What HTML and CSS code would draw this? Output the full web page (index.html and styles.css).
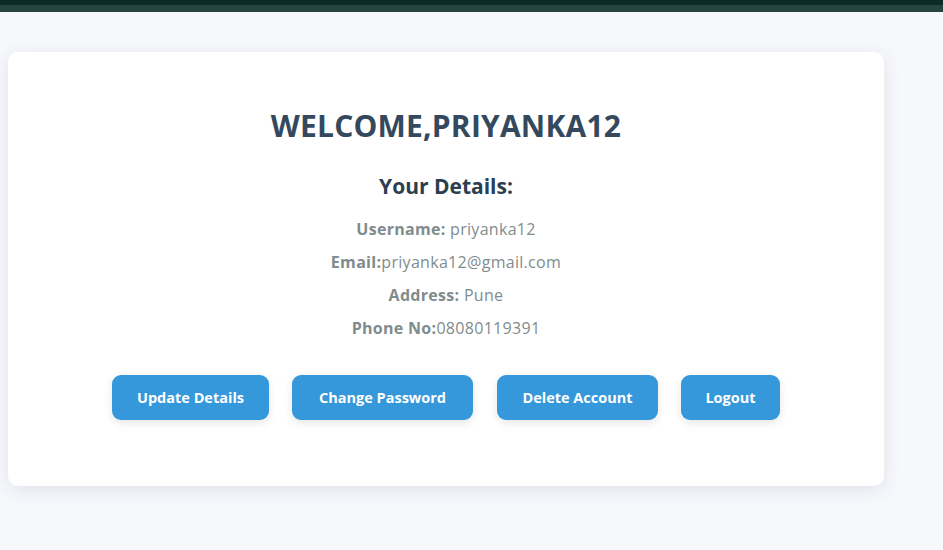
FILE: index.html
```html
<!DOCTYPE html>
<html lang="en">
<head>
<meta charset="utf-8">
<title>Profile</title>
<link rel="stylesheet" href="styles.css">
</head>
<body>
<header class="topbar"><div class="topbar-inner"></div></header>
<main class="page">
  <section class="card">
    <h1 class="welcome">WELCOME,PRIYANKA12</h1>
    <h2 class="subtitle">Your Details:</h2>
    <div class="details">
      <p class="row"><strong>Username:</strong> priyanka12</p>
      <p class="row"><strong>Email:</strong>priyanka12@gmail.com</p>
      <p class="row"><strong>Address:</strong> Pune</p>
      <p class="row"><strong>Phone No:</strong>08080119391</p>
    </div>
    <div class="actions">
      <button class="btn btn-update">Update Details</button>
      <button class="btn btn-pass">Change Password</button>
      <button class="btn btn-delete">Delete Account</button>
      <button class="btn btn-logout">Logout</button>
    </div>
  </section>
</main>
</body>
</html>
```
FILE: styles.css
```css
* { box-sizing: border-box; }
html, body { margin: 0; padding: 0; }
body {
  background: #f7f8fc;
  font-family: "Open Sans", "DejaVu Sans", sans-serif;
  height: 550px;
  overflow: hidden;
}
.topbar {
  background: #0e2a26;
  padding-top: 5px;
}
.topbar-inner {
  height: 7px;
  background: #27443f;
}
.page {
  padding: 40px 0 0 8px;
}
.card {
  width: 876px;
  background: #ffffff;
  border-radius: 10px;
  box-shadow: 0 4px 18px rgba(40, 50, 90, 0.10);
  padding: 54px 40px 66px;
  display: flex;
  flex-direction: column;
  align-items: center;
}
.welcome {
  margin: 0;
  font-size: 30px;
  line-height: 40px;
  font-weight: 700;
  color: #34495e;
  letter-spacing: 0.2px;
}
.subtitle {
  margin: 26px 0 0;
  font-size: 21px;
  line-height: 28px;
  font-weight: 700;
  color: #2c3e50;
}
.details {
  margin-top: 13px;
  display: flex;
  flex-direction: column;
  align-items: center;
}
.row {
  margin: 0;
  font-size: 16px;
  letter-spacing: 0.3px;
  line-height: 33px;
  color: #7f8c8d;
}
.row strong { font-weight: 700; }
.actions {
  margin-top: 30px;
  display: flex;
  gap: 23px;
  justify-content: center;
}
.btn {
  height: 45px;
  border: none;
  border-radius: 9px;
  background: #3498db;
  color: #ffffff;
  font-family: inherit;
  font-size: 14.5px;
  font-weight: 700;
  padding: 0 20px;
  box-shadow: 0 3px 8px rgba(0, 0, 0, 0.10);
}
.btn-update { width: 157px; }
.btn-pass { width: 181px; }
.btn-delete { width: 161px; margin-left: 1px; }
.btn-logout { width: 99px; }
```
